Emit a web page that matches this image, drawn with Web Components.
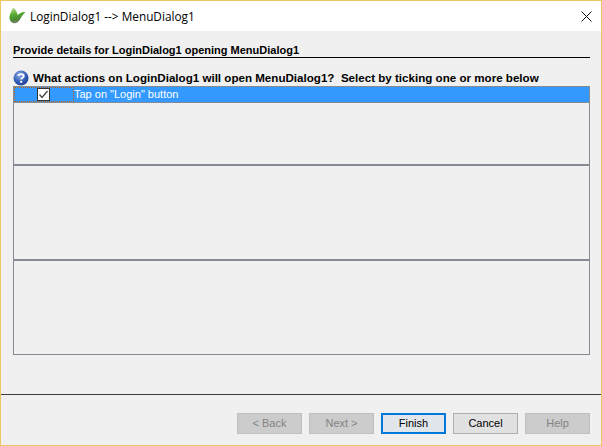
<!DOCTYPE html>
<html>
<head>
<meta charset="utf-8">
<title>LoginDialog1 --> MenuDialog1</title>
<style>
  html, body { margin: 0; padding: 0; background: #f0f0f0; }
</style>
</head>
<body>
<wizard-dialog>
  <span slot="title">LoginDialog1 --&gt; MenuDialog1</span>
  <span slot="heading">Provide details for LoginDialog1 opening MenuDialog1</span>
  <span slot="question">What actions on LoginDialog1 will open MenuDialog1?&nbsp; Select by ticking one or more below</span>
  <action-row slot="rows" checked>Tap on "Login" button</action-row>
  <wizard-button slot="buttons" disabled>&lt; Back</wizard-button>
  <wizard-button slot="buttons" disabled>Next &gt;</wizard-button>
  <wizard-button slot="buttons" default>Finish</wizard-button>
  <wizard-button slot="buttons">Cancel</wizard-button>
  <wizard-button slot="buttons" disabled>Help</wizard-button>
</wizard-dialog>

<script>
// Row in the action list: a tick box column and a label
class ActionRow extends HTMLElement {
  constructor() {
    super();
    this.attachShadow({ mode: 'open' });
    this.shadowRoot.innerHTML = `
      <style>
        :host {
          display: flex;
          height: 15px;
          background: #3399ff;
          color: #fff;
          font: 11px/15px Tahoma, "Liberation Sans", sans-serif;
        }
        .tick {
          box-sizing: border-box;
          width: 60px;
          height: 15px;
          padding-right: 1px;
          display: flex;
          justify-content: center;
          align-items: center;
          outline: 1px dotted #b5651d;
          outline-offset: -1px;
        }
        .box {
          box-sizing: border-box;
          width: 13px;
          height: 13px;
          background: #fff;
          border: 1px solid #333;
          display: flex;
        }
      </style>
      <div class="tick">
        <div class="box">
          <svg width="11" height="11" viewBox="0 0 11 11">
            <path d="M1.5 5.5 L4 8.5 L9.5 2" fill="none" stroke="#444" stroke-width="1.3"/>
          </svg>
        </div>
      </div>
      <div class="label"><slot></slot></div>
    `;
  }
}

class WizardButton extends HTMLElement {
  constructor() {
    super();
    this.attachShadow({ mode: 'open' });
    this.shadowRoot.innerHTML = `
      <style>
        :host {
          box-sizing: border-box;
          display: flex;
          justify-content: center;
          align-items: center;
          width: 65px;
          height: 21px;
          padding-bottom: 2px;
          background: #e1e1e1;
          border: 1px solid #adadad;
          color: #000;
          font: 11px Tahoma, "Liberation Sans", sans-serif;
        }
        :host([disabled]) {
          background: #cccccc;
          border-color: #bfbfbf;
          color: #838383;
        }
        :host([default]) {
          background: #e1e6ec;
          border-color: #0078d7;
          box-shadow: inset 0 0 0 1px #0078d7;
        }
      </style>
      <slot></slot>
    `;
  }
}

class WizardDialog extends HTMLElement {
  constructor() {
    super();
    this.attachShadow({ mode: 'open' });
    this.shadowRoot.innerHTML = `
      <style>
        :host {
          box-sizing: border-box;
          display: flex;
          flex-direction: column;
          width: 602px;
          height: 446px;
          background: #f0f0f0;
          border: 1px solid #f0c660;
          color: #000;
          font: 11px Tahoma, "Liberation Sans", sans-serif;
        }
        .titlebar {
          flex: none;
          height: 30px;
          background: #fff;
          display: flex;
          align-items: center;
          padding: 0 9px 0 8px;
          font: 11.8px "Open Sans", "Noto Sans", sans-serif;
        }
        .titlebar .text { flex: 1; margin-left: 4px; }
        .body {
          flex: none;
          height: 363px;
          padding: 0 11px 0 12px;
          display: flex;
          flex-direction: column;
        }
        .heading {
          margin-top: 13px;
          height: 13px;
          line-height: 13px;
          border-bottom: 1px solid #000;
          font-weight: bold;
        }
        .question {
          margin-top: 12px;
          height: 16px;
          display: flex;
          align-items: center;
          gap: 3px;
          font-weight: bold;
          font-size: 11.6px;
          white-space: nowrap;
        }
        .question span { padding-bottom: 2px; }
        .list {
          box-sizing: border-box;
          height: 269px;
          border: 1px solid #858a94;
          display: flex;
          flex-direction: column;
        }
        .cell { border-top: 2px solid #858a94; }
        .first { flex: none; display: flex; flex-direction: column; height: 77px; }
        .first .fill { flex: 1; border-top: 1px solid #858a94; }
        .mid { flex: none; height: 93px; }
        .last { flex: 1; }
        .foot {
          flex: 1;
          border-top: 1px solid #3c3c3c;
          display: flex;
          justify-content: flex-end;
          align-items: flex-start;
          gap: 7px;
          padding: 18px 11px 0 0;
        }
        ::slotted([slot="buttons"]) { flex: none; }
      </style>
      <div class="titlebar">
        <svg width="17" height="16" viewBox="0 0 17 16">
          <defs>
            <linearGradient id="leaf" x1="0" y1="0" x2="0.3" y2="1">
              <stop offset="0" stop-color="#c2e08a"/>
              <stop offset="0.5" stop-color="#52a82e"/>
              <stop offset="0.8" stop-color="#4d8a34"/>
              <stop offset="1" stop-color="#7a7f74"/>
            </linearGradient>
          </defs>
          <path d="M4 0 C6.5 0.5 8 4 8.5 7 C10.5 5 13.5 3.5 16.5 4 C14.5 5.5 12.5 8.5 11 11.5 C9.5 14.5 6.5 16 4 15 C1.5 14 0 11.5 0.5 8.5 C1 5.5 2.5 2.5 4 0 Z" fill="url(#leaf)"/>
        </svg>
        <span class="text"><slot name="title"></slot></span>
        <svg width="11" height="11" viewBox="0 0 11 11">
          <path d="M0.5 0.5 L10.5 10.5 M10.5 0.5 L0.5 10.5" stroke="#111" stroke-width="1" fill="none"/>
        </svg>
      </div>
      <div class="body">
        <div class="heading"><slot name="heading"></slot></div>
        <div class="question">
          <svg width="17" height="16" viewBox="0 0 17 16">
            <defs>
              <radialGradient id="ball" cx="0.4" cy="0.3" r="0.8">
                <stop offset="0" stop-color="#8fb0e8"/>
                <stop offset="0.6" stop-color="#2f58b4"/>
                <stop offset="1" stop-color="#1c3a8c"/>
              </radialGradient>
            </defs>
            <circle cx="8" cy="8" r="7.5" fill="url(#ball)"/>
            <path d="M5.5 6 C5.5 3.5 10.7 3.5 10.7 6 C10.7 7.8 8.2 7.6 8.2 9.6" fill="none" stroke="#fff" stroke-width="1.9"/>
            <rect x="7.2" y="10.8" width="2" height="2" fill="#fff"/>
          </svg>
          <span><slot name="question"></slot></span>
        </div>
        <div class="list">
          <div class="first">
            <slot name="rows"></slot>
            <div class="fill"></div>
          </div>
          <div class="cell mid"></div>
          <div class="cell last"></div>
        </div>
      </div>
      <div class="foot"><slot name="buttons"></slot></div>
    `;
  }
}

customElements.define('action-row', ActionRow);
customElements.define('wizard-button', WizardButton);
customElements.define('wizard-dialog', WizardDialog);
</script>
</body>
</html>
